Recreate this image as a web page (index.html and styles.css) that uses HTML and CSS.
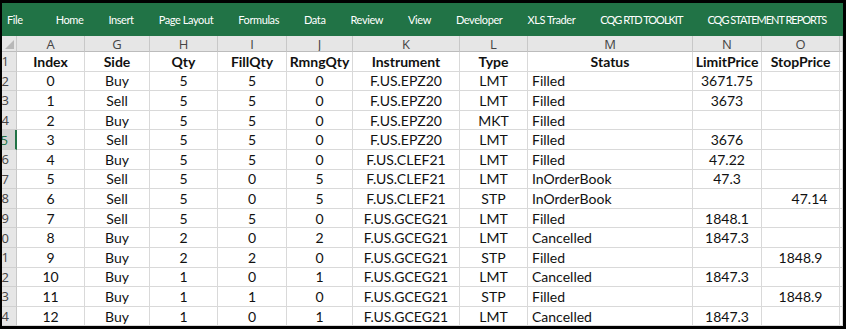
FILE: index.html
```html
<!DOCTYPE html>
<html lang="en">
<head>
  <meta charset="UTF-8" />
  <title>Orders - Excel</title>
  <link rel="stylesheet" href="styles.css">
</head>
<body>
  <div class="frame">
    <div class="ribbon">
      <span class="tab file">File</span>
      <span class="tab">Home</span>
      <span class="tab">Insert</span>
      <span class="tab">Page Layout</span>
      <span class="tab">Formulas</span>
      <span class="tab">Data</span>
      <span class="tab">Review</span>
      <span class="tab">View</span>
      <span class="tab">Developer</span>
      <span class="tab">XLS Trader</span>
      <span class="tab caps">CQG RTD TOOLKIT</span>
      <span class="tab caps">CQG STATEMENT REPORTS</span>
    </div>

    <div class="sheet">
      <!-- encabezados de columna -->
      <div class="corner"><span class="tri"></span></div>
      <div class="hd">A</div><div class="hd">G</div><div class="hd">H</div><div class="hd">I</div>
      <div class="hd">J</div><div class="hd">K</div><div class="hd">L</div><div class="hd">M</div>
      <div class="hd">N</div><div class="hd">O</div><div class="hd last"></div>

      <div class="rh">1</div>
      <div class="c b">Index</div><div class="c b">Side</div><div class="c b">Qty</div><div class="c b">FillQty</div>
      <div class="c b">RmngQty</div><div class="c b">Instrument</div><div class="c b">Type</div><div class="c b">Status</div>
      <div class="c b">LimitPrice</div><div class="c b">StopPrice</div><div class="x"></div>

      <div class="rh">2</div>
      <div class="c">0</div><div class="c">Buy</div><div class="c">5</div><div class="c">5</div>
      <div class="c">0</div><div class="c">F.US.EPZ20</div><div class="c">LMT</div><div class="l">Filled</div>
      <div class="c">3671.75</div><div class="c"></div><div class="x"></div>

      <div class="rh">3</div>
      <div class="c">1</div><div class="c">Sell</div><div class="c">5</div><div class="c">5</div>
      <div class="c">0</div><div class="c">F.US.EPZ20</div><div class="c">LMT</div><div class="l">Filled</div>
      <div class="c">3673</div><div class="c"></div><div class="x"></div>

      <div class="rh">4</div>
      <div class="c">2</div><div class="c">Buy</div><div class="c">5</div><div class="c">5</div>
      <div class="c">0</div><div class="c">F.US.EPZ20</div><div class="c">MKT</div><div class="l">Filled</div>
      <div class="c"></div><div class="c"></div><div class="x"></div>

      <div class="rh sel">5</div>
      <div class="c">3</div><div class="c">Sell</div><div class="c">5</div><div class="c">5</div>
      <div class="c">0</div><div class="c">F.US.EPZ20</div><div class="c">LMT</div><div class="l">Filled</div>
      <div class="c">3676</div><div class="c"></div><div class="x"></div>

      <div class="rh">6</div>
      <div class="c">4</div><div class="c">Buy</div><div class="c">5</div><div class="c">5</div>
      <div class="c">0</div><div class="c">F.US.CLEF21</div><div class="c">LMT</div><div class="l">Filled</div>
      <div class="c">47.22</div><div class="c"></div><div class="x"></div>

      <div class="rh">7</div>
      <div class="c">5</div><div class="c">Sell</div><div class="c">5</div><div class="c">0</div>
      <div class="c">5</div><div class="c">F.US.CLEF21</div><div class="c">LMT</div><div class="l">InOrderBook</div>
      <div class="c">47.3</div><div class="c"></div><div class="x"></div>

      <div class="rh">8</div>
      <div class="c">6</div><div class="c">Sell</div><div class="c">5</div><div class="c">0</div>
      <div class="c">5</div><div class="c">F.US.CLEF21</div><div class="c">STP</div><div class="l">InOrderBook</div>
      <div class="c"></div><div class="c stop-r">47.14</div><div class="x"></div>

      <div class="rh">9</div>
      <div class="c">7</div><div class="c">Sell</div><div class="c">5</div><div class="c">5</div>
      <div class="c">0</div><div class="c">F.US.GCEG21</div><div class="c">LMT</div><div class="l">Filled</div>
      <div class="c">1848.1</div><div class="c"></div><div class="x"></div>

      <div class="rh">10</div>
      <div class="c">8</div><div class="c">Buy</div><div class="c">2</div><div class="c">0</div>
      <div class="c">2</div><div class="c">F.US.GCEG21</div><div class="c">LMT</div><div class="l">Cancelled</div>
      <div class="c">1847.3</div><div class="c"></div><div class="x"></div>

      <div class="rh">11</div>
      <div class="c">9</div><div class="c">Buy</div><div class="c">2</div><div class="c">2</div>
      <div class="c">0</div><div class="c">F.US.GCEG21</div><div class="c">STP</div><div class="l">Filled</div>
      <div class="c"></div><div class="c">1848.9</div><div class="x"></div>

      <div class="rh">12</div>
      <div class="c">10</div><div class="c">Buy</div><div class="c">1</div><div class="c">0</div>
      <div class="c">1</div><div class="c">F.US.GCEG21</div><div class="c">LMT</div><div class="l">Cancelled</div>
      <div class="c">1847.3</div><div class="c"></div><div class="x"></div>

      <div class="rh">13</div>
      <div class="c">11</div><div class="c">Buy</div><div class="c">1</div><div class="c">1</div>
      <div class="c">0</div><div class="c">F.US.GCEG21</div><div class="c">STP</div><div class="l">Filled</div>
      <div class="c"></div><div class="c">1848.9</div><div class="x"></div>

      <div class="rh">14</div>
      <div class="c">12</div><div class="c">Buy</div><div class="c">1</div><div class="c">0</div>
      <div class="c">1</div><div class="c">F.US.GCEG21</div><div class="c">LMT</div><div class="l">Cancelled</div>
      <div class="c">1847.3</div><div class="c"></div><div class="x"></div>
    </div>
  </div>
</body>
</html>
```

FILE: styles.css
```css
body {
  margin: 0;
  background: #000;
  width: 846px;
  height: 329px;
  overflow: hidden;
}
.frame {
  margin: 3px 3px 0 2px;
  height: 323px;
  background: #fff;
  overflow: hidden;
}

/* Cinta verde */
.ribbon {
  height: 33px;
  background: #217346;
  display: flex;
  align-items: center;
  gap: 25px;
  padding-left: 5px;
  font-family: 'Lato', sans-serif;
  font-size: 11px;
  letter-spacing: -0.4px;
  color: #fff;
  white-space: nowrap;
}
.tab.file {
  margin-right: 8px;
}
.tab.caps {
  letter-spacing: -1px;
}

/* Hoja */
.sheet {
  display: grid;
  grid-template-columns: 15px 68px 65px 68px 69px 66px 107px 68px 165px 69px 78px 1fr;
  grid-template-rows: 16px repeat(14, 19.6px);
  font-family: 'Lato', sans-serif;
  font-size: 14px;
  color: #111;
}
.sheet > div {
  box-sizing: border-box;
  border-right: 1px solid #d9d9d9;
  border-bottom: 1px solid #d9d9d9;
  white-space: nowrap;
  overflow: hidden;
  display: flex;
  align-items: center;
}
.corner {
  background: #e6e6e6;
  position: relative;
}
.tri {
  position: absolute;
  right: 2px;
  bottom: 2px;
  width: 0;
  height: 0;
  border-left: 9px solid transparent;
  border-bottom: 9px solid #b8b8b8;
}
.sheet > .hd {
  background: #e6e6e6;
  justify-content: center;
  font-family: 'Open Sans', sans-serif;
  font-size: 13px;
  color: #444;
  border-right-color: #c8c8c8;
  border-bottom-color: #bcbcbc;
}
.sheet > .corner {
  border-bottom-color: #bcbcbc;
  border-right-color: #c8c8c8;
}
.sheet > .rh {
  background: #e6e6e6;
  justify-content: flex-end;
  padding-right: 7px;
  font-family: 'Open Sans', sans-serif;
  font-size: 13px;
  color: #444;
  border-right-color: #c8c8c8;
  border-bottom-color: #d0d0d0;
}
.sheet > .rh.sel {
  background: #d2d2d2;
  color: #217346;
  border-right: 2px solid #217346;
}
.c {
  justify-content: center;
}
.l {
  padding-left: 4px;
}
.b {
  font-weight: bold;
}
.stop-r {
  padding-left: 18px;
}
```
